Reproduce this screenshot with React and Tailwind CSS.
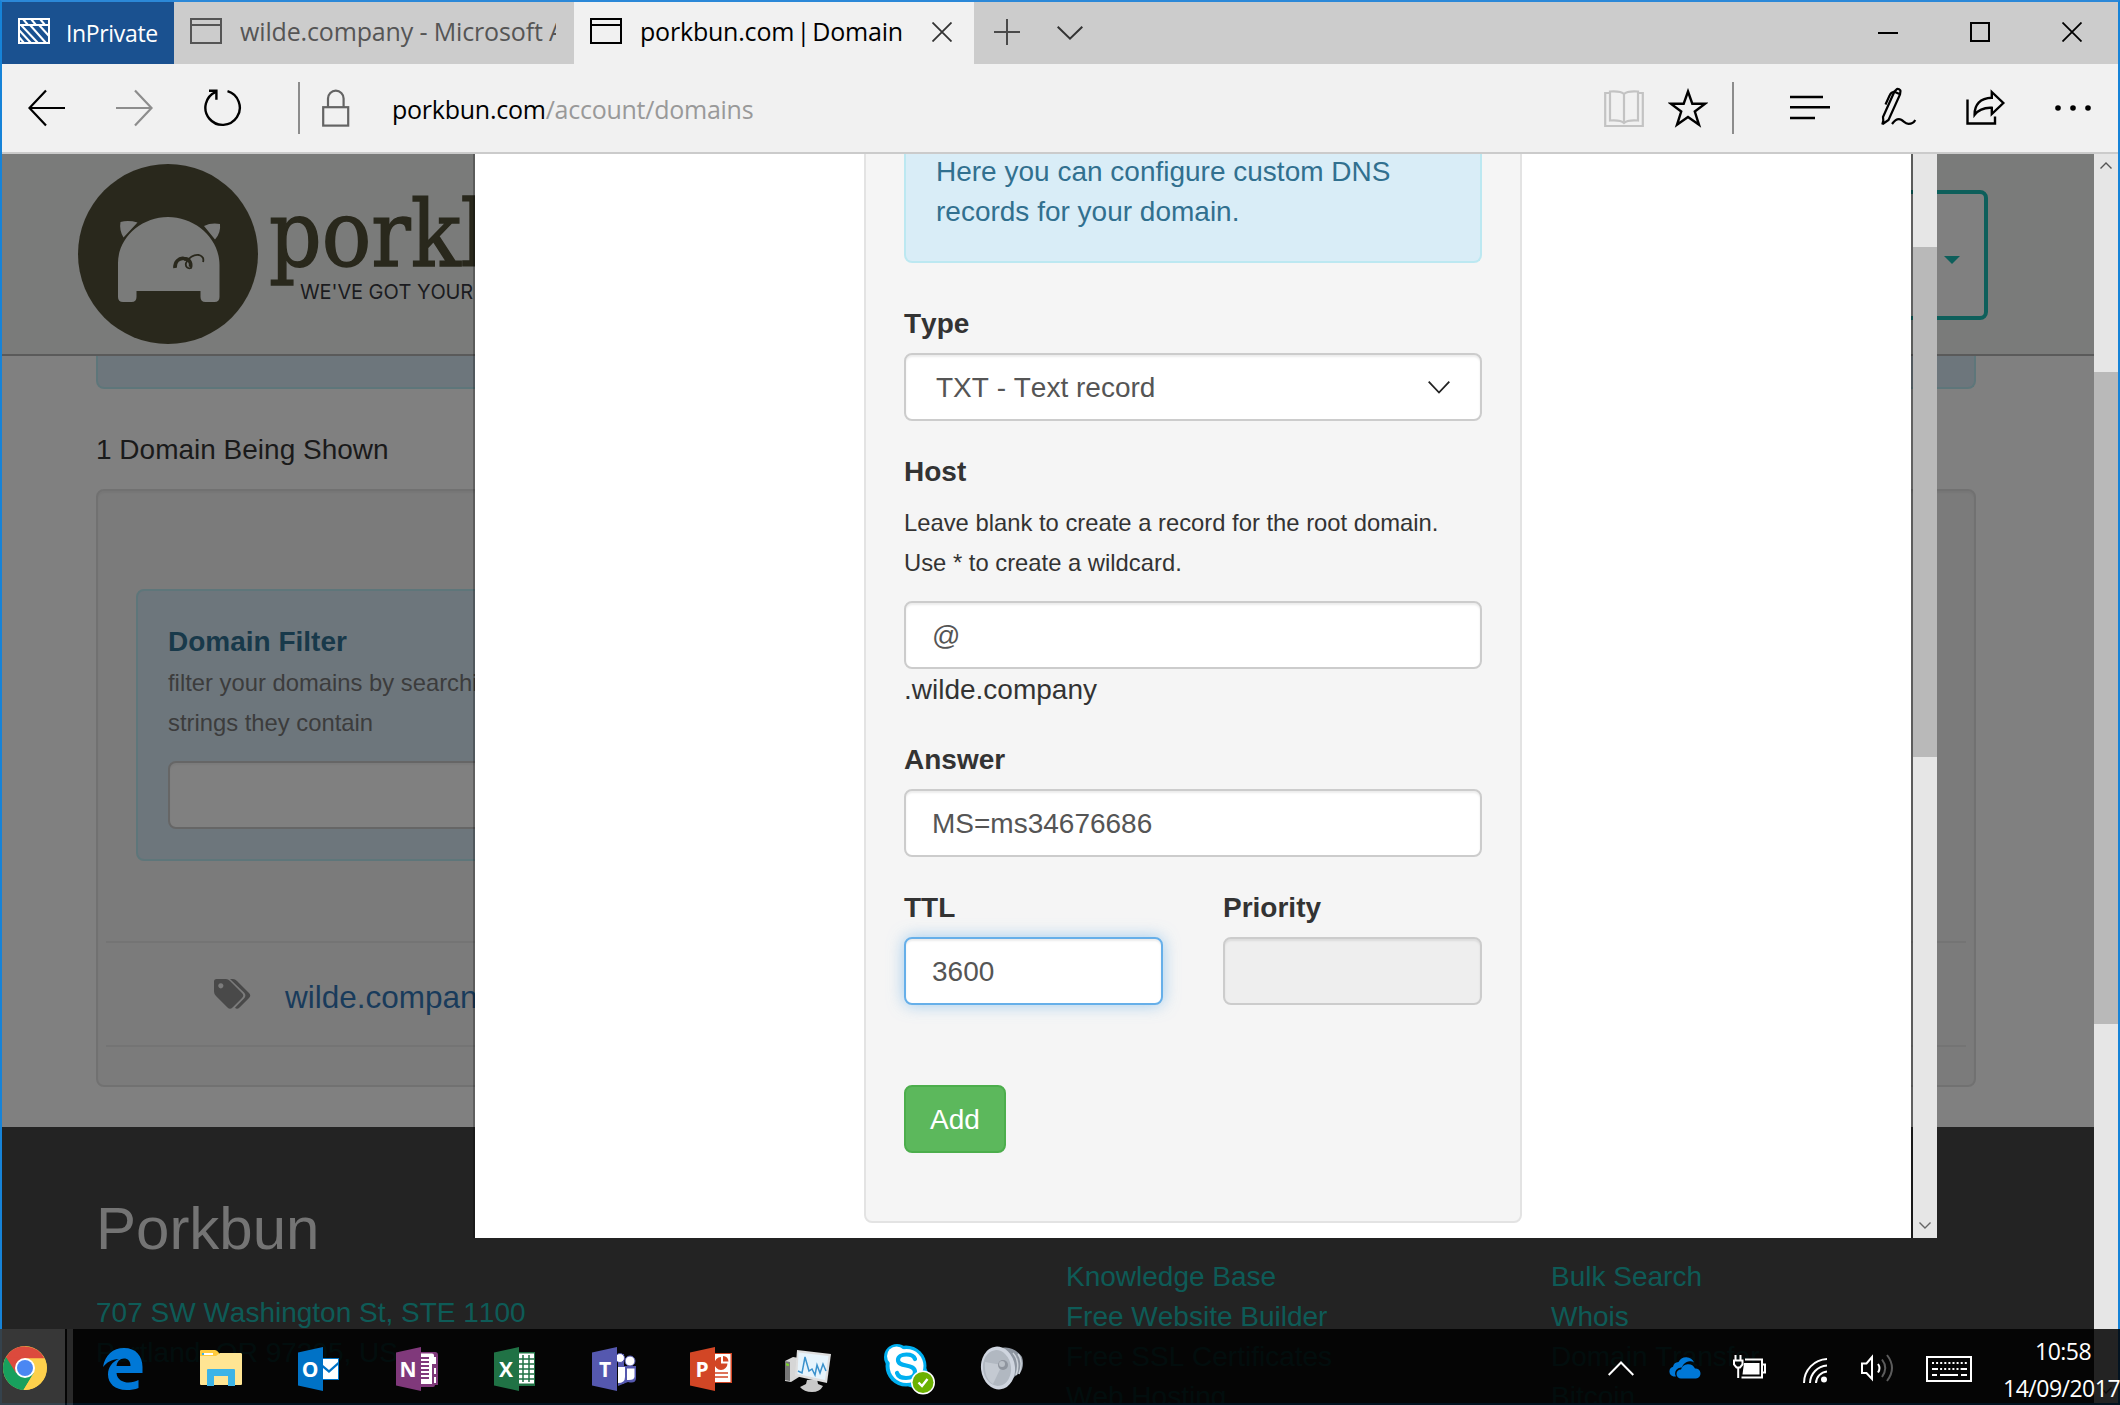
import React from "react";

const UI = "font-['Open_Sans','Noto_Sans',sans-serif]";

/* ---------- Browser chrome ---------- */

function PageIcon({ className }) {
  return (
    <svg width="32" height="26" viewBox="0 0 32 26" fill="none" stroke="currentColor" strokeWidth="2" className={className}>
      <rect x="1" y="1" width="30" height="24" />
      <path d="M1 7h30" />
    </svg>
  );
}

function TitleBar() {
  return (
    <div className={"flex h-[62px] bg-[#cccccc] " + UI}>
      <div className="flex w-[172px] items-center bg-[#1a5190] pl-4 text-white">
        <svg width="32" height="26" viewBox="0 0 32 26" fill="none" stroke="currentColor" strokeWidth="2" className="-mt-1 shrink-0">
          <rect x="1" y="1" width="30" height="24" />
          <path d="M1 7h30M5 1l5 6M13 1l5 6M22 1l5 6M1 12l12 13M3 7l17 18M12 7l16 18M21 7l10 11M1 19l5 6" />
        </svg>
        <span className="ml-4 text-[23px] leading-[32px] tracking-[-0.35px]">InPrivate</span>
      </div>
      <div className="flex w-[400px] items-center pl-4 text-[#555555]">
        <PageIcon className="-mt-1 shrink-0" />
        <span className="-mt-1 ml-[18px] w-[316px] overflow-hidden whitespace-nowrap text-[25px] leading-[36px] tracking-[-0.15px]">
          wilde.company - Microsoft Azure
        </span>
      </div>
      <div className="flex w-[400px] items-center bg-[#f1f1f1] pl-4 text-black">
        <PageIcon className="-mt-1 shrink-0" />
        <span className="-mt-1 ml-[18px] w-[264px] whitespace-nowrap text-[25px] leading-[36px] tracking-[-0.2px]">
          porkbun.com <span className="-mx-1">|</span> Domain
        </span>
        <svg width="20" height="20" viewBox="0 0 20 20" stroke="#333" strokeWidth="1.8" className="-mt-[2px] ml-7">
          <path d="M0.5 0.5l19 19M19.5 0.5l-19 19" />
        </svg>
      </div>
      <div className="flex items-center pl-5">
        <svg width="26" height="26" viewBox="0 0 26 26" stroke="#4a4a4a" strokeWidth="2" className="-mt-[3px]">
          <path d="M13 0v26M0 13h26" />
        </svg>
        <svg width="26" height="14" viewBox="0 0 26 14" fill="none" stroke="#333" strokeWidth="2" className="-mt-px ml-[37px]">
          <path d="M0.7 0.7L13 12.6 25.3 0.7" />
        </svg>
      </div>
      <div className="-mt-[2px] ml-auto flex items-center gap-[66px] pr-9">
        <svg width="20" height="20" viewBox="0 0 20 20" stroke="#000" strokeWidth="2" className="mr-[6px]"><path d="M0 11h20" /></svg>
        <svg width="20" height="20" viewBox="0 0 20 20" fill="none" stroke="#000" strokeWidth="2" className="mr-[6px]"><rect x="1" y="1" width="18" height="18" /></svg>
        <svg width="20" height="20" viewBox="0 0 20 20" stroke="#000" strokeWidth="1.8"><path d="M0.5 0.5l19 19M19.5 0.5l-19 19" /></svg>
      </div>
    </div>
  );
}

function AddressBar() {
  return (
    <div className={"flex h-[90px] items-center border-b-2 border-[#cbcbcb] bg-[#f1f1f1] pl-[26px] pr-[27px] " + UI}>
      <svg width="38" height="38" viewBox="0 0 38 38" fill="none" stroke="#000" strokeWidth="2.2"><path d="M37 19H1.5M18 1.5L1.5 19 18 36.500" /></svg>
      <svg width="38" height="38" viewBox="0 0 38 38" fill="none" stroke="#8d8d8d" strokeWidth="2.2" className="ml-[49px]"><path d="M1 19h35.500M20 1.500L36.500 19 20 36.500" /></svg>
      <svg width="40" height="40" viewBox="0 0 40 40" fill="none" stroke="#000" strokeWidth="2.4" className="ml-[50px]">
        <path d="M24.500 3.200A17.200 17.200 0 1 1 13 3.800" />
        <path d="M6 2.800h7.400v9" />
      </svg>
      <div className="ml-[55px] h-[52px] w-[2px] bg-[#8c8c8c]" />
      <svg width="28" height="38" viewBox="0 0 28 38" fill="none" stroke="#646464" strokeWidth="2.2" className="ml-[22px]">
        <rect x="1.200" y="18.200" width="25" height="18.400" />
        <path d="M6 18v-8.500a7.800 7.800 0 0 1 15.600 0V18" />
      </svg>
      <div className="ml-[42px] mt-px whitespace-nowrap text-[25px] leading-[36px] tracking-[-0.25px] text-black">
        porkbun.com<span className="text-[#999999]">/account/domains</span>
      </div>
      <div className="ml-auto flex items-center">
        <svg width="40" height="40" viewBox="0 0 40 40" fill="none" stroke="#c3c3c3" strokeWidth="2.200">
          <path d="M6 5H1.200v33h37.600V5H34" />
          <path d="M20 6c-2.500-2.500-7-3-14-2.500v29c7-.5 11.500 0 14 2.500 2.500-2.500 7-3 14-2.500v-29C27 3 22.500 3.500 20 6zM20 6v29" />
        </svg>
        <svg width="40" height="40" viewBox="0 0 40 40" fill="none" stroke="#000" strokeWidth="2.400" className="ml-6">
          <path d="M20 3.500l4.300 12.200h12.900L26.800 23.500l4.200 13.300L20 29 9 36.800l4.200-13.300L2.800 15.700h12.900z" />
        </svg>
        <div className="ml-6 h-[52px] w-[2px] bg-[#8c8c8c]" />
        <svg width="40" height="26" viewBox="0 0 40 26" stroke="#000" strokeWidth="2.400" className="-mt-[3px] ml-[56px]">
          <path d="M0 3h33M0 13.300h40M0 24h25" />
        </svg>
        <svg width="36" height="38" viewBox="0 0 36 38" fill="none" stroke="#000" strokeWidth="2.200" className="-mt-1 ml-[51px]">
          <path d="M15.500 2.500c1-1.500 4.500 0 3.900 2L19 7.500 7.500 33 2.500 36.500 2 30 13.500 4.500zM14 5l5 2.200M2.300 33.500l-1 4" />
          <path d="M13 4.800c-2 .2-3.500 1.600-4.300 3.500L4.500 17.500" />
          <path d="M11 37c3-4 6-6 9.200-4.200 3 1.700 3.800 4 7.300 4 3.300 0 5.500-1.300 6.700-3.800" />
        </svg>
        <svg width="40" height="38" viewBox="0 0 40 38" fill="none" stroke="#000" strokeWidth="2.400" className="-mt-[3px] ml-[49px]">
          <path d="M1.500 11.500v24h27.500v-7" />
          <path d="M25.800 4l11.500 11-11.500 11v-6.200c-8-.5-13 1.700-17.200 7C8.400 17 14 10 25.800 9.800z" />
        </svg>
        <svg width="36" height="6" viewBox="0 0 36 6" className="ml-[49px]">
          <circle cx="3" cy="3" r="2.800" /><circle cx="18" cy="3" r="2.800" /><circle cx="33" cy="3" r="2.800" />
        </svg>
      </div>
    </div>
  );
}

/* ---------- Dimmed page below the dialog ---------- */

function PigLogo() {
  return (
    <svg width="180" height="180" viewBox="0 0 180 180" className="shrink-0">
      <circle cx="90" cy="90" r="90" fill="#29281c" />
      <path d="M40 99C40 74 63 53 90 53s51.500 21 51.500 48v32q0 5-5 5h-9q-5 0-5-5v-6H58.500v6q0 5-5 5h-8.500q-5 0-5-5z" fill="#7a7b7a" />
      <path d="M42.500 58q8-2 17 .5L45.500 73.500Q41 66 42.500 58zM126 62q7-3.500 16-2 1 9-5 15.500z" fill="#7a7b7a" />
      <path d="M106 96c4-1 8 3 7 8-3 1-6-1-5-5 2-5 8-9 13-8 4 1 5 4 4 7" fill="none" stroke="#29281c" strokeWidth="1.800" />
      <path d="M97 104c-.5-6 4-10.500 9-9.500 5 0 7.500 4 6.500 8.500" fill="none" stroke="#29281c" strokeWidth="3.600" />
    </svg>
  );
}

function SiteHeader() {
  return (
    <div className="flex h-[202px] border-b-2 border-[#5a5a5a] bg-[#7a7b7a] pl-[76px] pt-[10px]">
      <PigLogo />
      <div className="ml-[11px] w-[220px] overflow-hidden pt-[18px]">
        <div className="h-[90px] origin-left scale-x-[0.905] whitespace-nowrap font-['DejaVu_Serif',serif] text-[91px] leading-[106px] text-[#29281c] [-webkit-text-stroke:1.5px_#29281c]">porkbun</div>
        <div className="ml-[31px] mt-[8px] whitespace-nowrap font-['Inter',sans-serif] text-[20px] leading-[24px] tracking-[-0.1px] text-[#1b1b20]">WE'VE GOT YOUR DOMAINS</div>
      </div>
      <div className="ml-auto mr-[106px] mt-[26px] flex h-[130px] w-[180px] items-center justify-end rounded-lg border-4 border-[#0e5f5b] bg-[#808080] pr-6">
        <svg width="16" height="8" viewBox="0 0 16 8" className="mt-[10px]"><path d="M0 0h16L8 8z" fill="#0e5f5b" /></svg>
      </div>
    </div>
  );
}

function DomainList() {
  return (
    <div className="flex flex-col px-[94px] pr-[118px] text-[28px] leading-[40px]">
      <div className="h-[33px] rounded-b-lg border-2 border-t-0 border-[#5e767a] bg-[#6d767c]" />
      <div className="mt-[41px] text-[#1a1a1a]">1 Domain Being Shown</div>
      <div className="mt-[19px] h-[598px] rounded-lg border-2 border-[#717171] bg-[#7b7b7b] px-2 shadow-[inset_0_2px_2px_rgba(0,0,0,0.04)]">
        <div className="ml-[30px] mt-[98px] h-[272px] w-[420px] rounded-lg border-2 border-[#5e767a] bg-[#6d767c] px-[30px] pt-[31px]">
          <div className="font-bold">
            <span className="text-[#18394a]">Domain Filter</span>
          </div>
          <div className="mt-px whitespace-nowrap text-[23.800px] leading-[40px] text-[#3c3c3c]">filter your domains by searching for<br />strings they contain</div>
          <div className="mt-[18px] h-[68px] rounded-lg border-2 border-[#666666] bg-[#808080] shadow-[inset_0_2px_2px_rgba(0,0,0,0.04)]" />
        </div>
        <div className="mt-[80px] flex h-[106px] items-center border-y-2 border-[#747474] pl-[108px] pt-1">
          <svg width="38" height="32" viewBox="0 0 38 32" fill="#494949" className="-mt-[2px]">
            <path fillRule="evenodd" d="M0 2.500Q0 0 2.500 0H12q2 0 4 2l12 12q2.500 2.500 0 5L18.500 28.500q-2.500 2.500-5 0L2 17Q0 15 0 12.500zM6.800 4.200a2.600 2.600 0 1 0 .01 0z" />
            <path d="M16 0h3q2 0 4 2l12 12q2.500 2.500 0 5L25.500 28.500q-2.500 2.500-4.500.3L30 19.500q2.800-3 0-6z" />
          </svg>
          <span className="ml-[33px] mt-px whitespace-nowrap text-[31.500px] text-[#193b5b]">wilde.company</span>
        </div>
      </div>
    </div>
  );
}

function Footer() {
  return (
    <div className="mt-10 flex h-[278px] bg-[#232323] pl-[94px] text-[28px] leading-[40px] text-[#0e5b57]">
      <div className="w-[970px] pt-[69px]">
        <div className="text-[60px] leading-[66px] text-[#747474]">Porkbun</div>
        <div className="mt-[31px]">707 SW Washington St, STE 1100<br />Portland, OR 97205, US</div>
      </div>
      <div className="w-[485px] pt-[130px]">
        Knowledge Base<br />Free Website Builder<br />Free SSL Certificates<br />Web Hosting
      </div>
      <div className="pt-[130px]">Bulk Search<br />Whois<br />Domain Transfer<br />Bitcoin</div>
    </div>
  );
}

/* ---------- DNS dialog ---------- */

const field = "flex h-[68px] items-center rounded-lg border-2 pt-[2px] text-[#555555] ";

function DnsDialog() {
  return (
    <div className="absolute left-[471px] top-0 flex h-[1084px] w-[1464px] overflow-hidden">
      <div className="w-[2px] bg-black/25" />
      <div className="flex flex-1 items-start bg-white pl-[389px]">
        <div className="-mt-[20px] h-[1089px] w-[658px] rounded-lg border-2 border-[#e3e3e3] bg-[#f5f5f5] px-[38px] text-[28px] leading-[40px] text-[#333333]">
          <div className="-mt-[2px] h-[129px] rounded-b-lg border-2 border-t-0 border-[#bce8f1] bg-[#d9edf7] px-[30px] pt-[18px] text-[#31708f]">
            Here you can configure custom DNS records for your domain.
          </div>
          <div className="mt-[41px] font-bold">Type</div>
          <div className={field + "mt-[9px] justify-between border-[#cccccc] bg-white pl-[30px] pr-[30px] shadow-[inset_0_2px_2px_rgba(0,0,0,0.075)]"}>
            TXT - Text record
            <svg width="22" height="13" viewBox="0 0 22 13" fill="none" stroke="#222" strokeWidth="1.800" className="-mt-[2px]"><path d="M0.700 0.700L11 11.500 21.300 0.700" /></svg>
          </div>
          <div className="mt-[31px] font-bold">Host</div>
          <div className="mt-[11px] whitespace-nowrap text-[23.800px]">
            Leave blank to create a record for the root domain.<br />Use * to create a wildcard.
          </div>
          <div className={field + "mt-[18px] border-[#cccccc] bg-white pl-[26px] shadow-[inset_0_2px_2px_rgba(0,0,0,0.075)]"}>@</div>
          <div className="mt-px">.wilde.company</div>
          <div className="mt-[30px] font-bold">Answer</div>
          <div className={field + "mt-[9px] border-[#cccccc] bg-white pl-[26px] shadow-[inset_0_2px_2px_rgba(0,0,0,0.075)]"}>MS=ms34676686</div>
          <div className="mt-[31px] grid grid-cols-2 gap-x-[60px]">
            <div>
              <div className="font-bold">TTL</div>
              <div className={field + "mt-[9px] border-[#66afe9] bg-white pl-[26px] shadow-[inset_0_2px_2px_rgba(0,0,0,0.075),0_0_16px_rgba(102,175,233,0.6)]"}>3600</div>
            </div>
            <div>
              <div className="font-bold">Priority</div>
              <div className={field + "mt-[9px] border-[#cccccc] bg-[#eeeeee] shadow-[inset_0_2px_2px_rgba(0,0,0,0.075)]"} />
            </div>
          </div>
          <div className="mt-20 flex h-[68px] w-[102px] items-center justify-center rounded-lg border-2 border-[#4cae4c] bg-[#5cb85c] pt-[2px] text-white">Add</div>
        </div>
      </div>
      <div className="w-[2px] bg-black/25" />
      <div className="flex w-6 flex-col bg-[#e6e6e6]">
        <div className="mt-[93px] h-[510px] bg-[#b9b9b9]" />
        <svg width="12" height="7" viewBox="0 0 12 7" fill="none" stroke="#666" strokeWidth="1.400" className="mx-auto mb-[9px] mt-auto"><path d="M0.500 0.500L6 6l5.500-5.500" /></svg>
      </div>
    </div>
  );
}

/* ---------- Taskbar ---------- */

function OfficeBadge({ color, children, letter, x }) {
  return (
    <svg width="44" height="44" viewBox="0 0 44 44">
      {children}
      <path d="M0 5.500L25 0v44L0 38.500z" fill={color} />
      <text x={x || 12} y="30" textAnchor="middle" fill="#fff" fontFamily="'Open Sans', sans-serif" fontWeight="700" fontSize="21">{letter}</text>
    </svg>
  );
}

function TaskApps() {
  return (
    <div className="flex items-center">
      <div className="flex h-[76px] w-[65px] items-center bg-white/20 pl-[3px] pt-[2px]">
        <svg width="44" height="44" viewBox="0 0 44 44">
          <circle cx="22" cy="22" r="22" fill="#fdd04c" />
          <path d="M22 22L3 11A22 22 0 0 0 20.500 44L31 27z" fill="#17a05d" />
          <path d="M22 22L3 11a22 22 0 0 1 38.500 1.500H22z" fill="#dc4a3d" />
          <path d="M3 11l10 16 9-14.500z" fill="#dc4a3d" />
          <path d="M31 26.500L20.500 44A22 22 0 0 0 41.500 12.500H22z" fill="#fdd04c" />
          <circle cx="22" cy="22" r="10" fill="#fff" />
          <circle cx="22" cy="22" r="8" fill="#4a87f3" />
        </svg>
      </div>
      <div className="ml-[2px] h-[76px] w-[6px] bg-white/15" />
      <div className="flex items-center pt-1">
        <svg width="40" height="42" viewBox="0 0 40 42" className="ml-[30px]" fill="#0078d7">
          <path d="M0 19C2 7 10 0 21 0c12 0 18.500 8 18.500 19v6H13.500c.5 7 7 9.500 12 9.500 4 0 7-1 10-2.500v8c-3.500 1.500-7.500 2-12 2C12 42 5 35.500 5 26.500 5 19 9.500 13.500 16 11 8.500 11.500 3.500 14.500 0 19zM13.500 18h14c0-5-2.500-7.500-6.500-7.500S14 13.500 13.500 18z" fillRule="evenodd" />
        </svg>
        <svg width="42" height="38" viewBox="0 0 42 38" className="ml-[57px]">
          <path d="M0 1q0-1 1-1h14q2 0 4 3l1.500 3H0z" fill="#ffcb3d" /><path d="M2 3h11v2H2z" fill="#fff" /><path d="M2 3h2v2H2z" fill="#3cb4e7" />
          <path d="M0 6h16l4-3h20.500q1.500 0 1.500 1v30q0 1-1 1H1q-1 0-1-1z" fill="#ffe593" />
          <path d="M7 20q0-1 1-1h26q1 0 1 1v16h-7V26H14v10H7z" fill="#3cb4e7" />
        </svg>
        <div className="ml-[56px] flex items-center gap-[54px]">
          <OfficeBadge color="#0072c6" letter="O">
            <path d="M24 11h17v22H24z" fill="#0072c6" /><path d="M25 12h15v3l-9 8-6-5zM25 21l6 5 9-8v14H25z" fill="#fff" />
          </OfficeBadge>
          <OfficeBadge color="#80397b" letter="N">
            <path d="M24 5h15q3 0 3 3v30h-3q0 2-2 2H24z" fill="#80397b" />
            <path d="M25 6.500h11q2 0 2 2V17h-2v20H25z" fill="#fff" /><path d="M24 11h9M24 15h9M24 19h9M24 23h9M24 27h9M24 31h9" stroke="#80397b" strokeWidth="1.800" /><path d="M39 10v7M39 21v6M39 30v6" stroke="#fff" strokeWidth="2" />
          </OfficeBadge>
          <OfficeBadge color="#207245" letter="X">
            <path d="M24 5h17v34H24z" fill="#207245" /><path d="M25 6.500h15v30H25z" fill="#fff" /><path d="M25 12h15M25 17h15M25 22h15M25 27h15M25 32h15M29 8v27M35 8v27" stroke="#207245" strokeWidth="1.500" />
          </OfficeBadge>
          <OfficeBadge color="#5558af" letter="T" x={13}>
            <path d="M26 7h6v30h-6zM26 19h18v12q0 6-8 4l-10 4z" fill="#5558af" />
            <circle cx="28" cy="11" r="4.500" fill="#fff" stroke="#5558af" /><circle cx="38" cy="14" r="5" fill="#fff" stroke="#5558af" />
            <path d="M26 20h7v10q0 6-7 6z" fill="#fff" /><path d="M35 21.500h7.500v8q0 4-7.500 3.500z" fill="#fff" />
          </OfficeBadge>
          <OfficeBadge color="#d24625" letter="P">
            <path d="M24 6h18v30H24z" fill="#d24625" /><path d="M25 7h15.500v28H25z" fill="#fff" />
            <path d="M31 10a6.500 6.500 0 1 0 6.500 6.500H31z" fill="#d24625" /><path d="M33 9v5.500h5.500A6 6 0 0 0 33 9z" fill="#d24625" /><path d="M25 26h13M25 30h13" stroke="#d24625" strokeWidth="1.500" />
          </OfficeBadge>
        </div>
        <svg width="46" height="42" viewBox="0 0 46 42" className="ml-[51px] mt-[3px]">
          <path d="M0 11l8-4 6 1v19l-8 5-6-1z" fill="#d6d6d6" /><path d="M0 11l5 1v19l-5-1z" fill="#777" /><path d="M1 13l3 1v2l-3-.5z" fill="#7bd22b" />
          <path d="M22 30l10-1 1 5 5 2q-3 6-11 6t-12-5l6-3z" fill="#c9c9c9" />
          <path d="M12 0l34 4-4 29-32-7z" fill="#dedede" /><path d="M13.500 2.500l30 3.500-3.500 24-27.500-6z" fill="#e7f4fc" />
          <path d="M13 21l4 2 3-16 4 14 3-2 3 6 2-10 3 8 3-9 3 7" fill="none" stroke="#3a91cc" strokeWidth="1.500" />
        </svg>
        <svg width="52" height="52" viewBox="0 0 52 52" className="ml-[53px]">
          <circle cx="13" cy="14" r="13" fill="#00aff0" /><circle cx="31" cy="32" r="13" fill="#00aff0" /><circle cx="22" cy="23" r="20.500" fill="#00aff0" />
          <circle cx="12.500" cy="13" r="9.500" fill="#fff" /><circle cx="22.500" cy="23" r="17" fill="#fff" />
          <path d="M31 16c-1-3-4.500-4.500-8.500-4.500-5 0-8.500 2-8.500 5.500 0 8 17 3 17 12 0 4-4 6-9 6-4.500 0-8-2-9-5" fill="none" stroke="#00aff0" strokeWidth="4.200" strokeLinecap="round" />
          <circle cx="39" cy="39.500" r="12" fill="#fff" /><circle cx="39" cy="39.500" r="10.500" fill="#6bb100" />
          <path d="M34.500 39.500l3.500 3.500 5.500-7" fill="none" stroke="#fff" strokeWidth="2.400" />
        </svg>
        <svg width="44" height="44" viewBox="0 0 44 44" className="-mt-[3px] ml-[44px]">
          <path d="M22 2c9-2 17 4 20 9 2 6 1 12-2 16-5 3-9 6-13 12z" fill="#8d95a0" />
          <path d="M33 7c5 5 6 14 3 22M38 8c4 5 4 13 1 20" fill="none" stroke="#cdd3da" strokeWidth="1.500" />
          <ellipse cx="18" cy="22" rx="17" ry="21.500" fill="#cfd5df" transform="rotate(-7 18 22)" />
          <ellipse cx="17" cy="22" rx="14" ry="18" fill="#b1b8c1" transform="rotate(-7 17 22)" />
          <path d="M5 16l17 3-9 19C7 35 4 26 5 16z" fill="#c4cad2" />
          <circle cx="23" cy="19" r="5" fill="#8f959e" /><circle cx="22" cy="18" r="3" fill="#b9bfc6" />
        </svg>
      </div>
    </div>
  );
}

function Tray() {
  return (
    <div className={"ml-auto flex h-[76px] items-center text-white " + UI}>
      <svg width="26" height="15" viewBox="0 0 26 15" fill="none" stroke="#fff" strokeWidth="2" className="mt-[2px]"><path d="M0.700 14L13 1.500 25.300 14" /></svg>
      <svg width="32" height="22" viewBox="0 0 32 22" className="ml-[35px] mt-px" fill="#0078d7">
        <path d="M7 19.500H4.500A5 5 0 0 1 4 9.800 6 6 0 0 1 9.500 5 8.500 8.500 0 0 1 25 5.500 8 8 0 0 0 13 10.500 6 6 0 0 0 7 19.500z" />
        <path d="M12 21.500a4.500 4.500 0 0 1 0-9A7.500 7.500 0 0 1 26 11.500a5 5 0 0 1 1 10z" />
      </svg>
      <svg width="33" height="24" viewBox="0 0 33 24" className="ml-[32px]" fill="none" stroke="#fff" strokeWidth="2">
        <path d="M12 4.500h17v18H8.500M29 9.500h3v8h-3" /><path d="M11 8h15.500v11.500H9.500z" fill="#fff" stroke="none" />
        <path d="M2.500 0v5M7.500 0v5M1 5.500h8.500v4L7 12.500H3.500L1 9.500zM5.200 12v11" />
      </svg>
      <svg width="25" height="25" viewBox="0 0 25 25" className="ml-[37px] mt-[7px]" fill="none" stroke="#fff" strokeWidth="2">
        <path d="M1 25A24 24 0 0 1 24 1M7 25A18 18 0 0 1 24 7.500M13 25A12 12 0 0 1 24 13.500" /><circle cx="21" cy="21.500" r="3" fill="#fff" stroke="none" />
      </svg>
      <svg width="33" height="28" viewBox="0 0 33 28" className="ml-[33px] mt-[2px]" fill="none" stroke="#fff" strokeWidth="2">
        <path d="M1 9.500h4.500L11 3v22L5.500 19H1z" /><path d="M17 10q3 4 0 8.500" />
        <path d="M21 5.500q6.500 8.500 0 17.500M26 1q10 13 0 26" stroke="#5c5c5c" />
      </svg>
      <svg width="46" height="26" viewBox="0 0 46 26" className="ml-[32px] mt-[3px]" fill="none" stroke="#fff" strokeWidth="2">
        <rect x="1" y="1" width="44" height="24" /><path d="M6 7h35M10 13h28" strokeDasharray="2 2.100" /><path d="M6 13h5M36 13h5M6 19h5M14 19h18M35 19h6" />
      </svg>
      <div className="ml-[31px] flex h-[76px] w-[117px] flex-col overflow-hidden pt-[4px] text-[23px] leading-[37px] tracking-[-0.5px]">
        <div className="ml-8">10:58</div>
        <div className="whitespace-nowrap">14/09/2017</div>
      </div>
    </div>
  );
}

export default function App() {
  return (
    <div className="relative h-[1405px] w-[2120px] overflow-hidden bg-[#808080] font-['Liberation_Sans',Arial,sans-serif]">
      <div className="flex h-[1405px] flex-col border-2 border-[#1683d8] border-t-[#2b88d8]">
        <TitleBar />
        <AddressBar />
        <div className="relative flex h-[1249px] overflow-hidden [font-kerning:none]">
          <div className="w-[2092px] overflow-hidden">
            <SiteHeader />
            <DomainList />
            <Footer />
          </div>
          <div className="flex w-6 flex-col items-center bg-[#e6e6e6]">
            <svg width="12" height="7" viewBox="0 0 12 7" fill="none" stroke="#555" strokeWidth="1.400" className="mt-[8px] shrink-0"><path d="M0.500 6.500L6 1l5.500 5.500" /></svg>
            <div className="mt-[203px] h-[652px] w-6 bg-[#b9b9b9]" />
            <svg width="12" height="7" viewBox="0 0 12 7" fill="none" stroke="#555" strokeWidth="1.400" className="mb-[9px] mt-auto"><path d="M0.500 0.500L6 6l5.500-5.500" /></svg>
          </div>
          <DnsDialog />
        </div>
      </div>
      <div className="absolute bottom-0 left-0 flex h-[76px] w-[2120px] items-center overflow-hidden bg-black/85">
        <TaskApps />
        <Tray />
      </div>
    </div>
  );
}
